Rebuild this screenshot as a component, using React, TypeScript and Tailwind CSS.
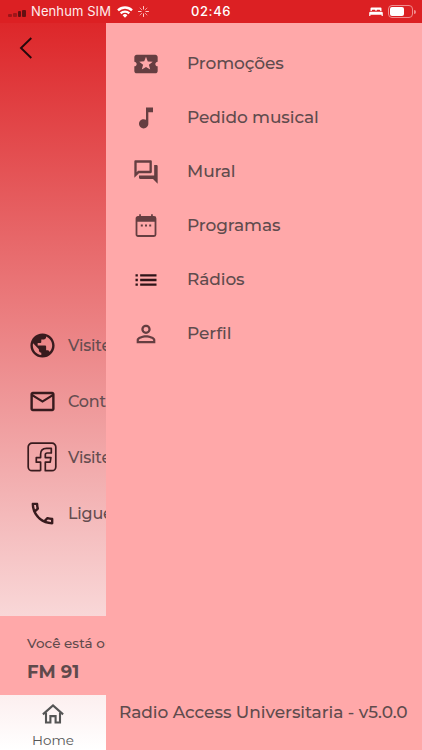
import type { ReactNode } from 'react';
import {
  MdList,
  MdLocalActivity,
  MdMailOutline,
  MdMusicNote,
  MdOutlineLocalPhone,
  MdOutlineQuestionAnswer,
  MdPersonOutline,
  MdPublic,
} from 'react-icons/md';

interface MenuItem {
  label: string;
  icon: ReactNode;
}

function CalendarIcon() {
  return (
    <svg width="28" height="28" viewBox="0 0 28 28" fill="none">
      <rect x="4.5" y="5" width="19" height="19" rx="1.5" stroke="currentColor" strokeWidth="1.8" />
      <path d="M4.5 5h19v4.8h-19zM7.2 2.2h1.7V5H7.2zM19.1 2.2h1.7V5h-1.7z" fill="currentColor" />
      <path d="M8.8 12.6h2v2h-2zM13 12.6h2v2h-2zM17.2 12.6h2v2h-2z" fill="currentColor" />
    </svg>
  );
}

function HomeIcon() {
  return (
    <svg width="22" height="20" viewBox="0 0 22 20" fill="none" stroke="currentColor" strokeWidth="2.1">
      <path d="M.9 10.4 11 1.5l10.1 8.9" />
      <path d="M4 8.5V18.5h4.4v-6.4h5.2v6.4H18V8.5" />
    </svg>
  );
}

function FacebookIcon() {
  return (
    <svg width="30" height="30" viewBox="0 0 30 30" fill="none" stroke="currentColor" strokeWidth="1.7" strokeLinejoin="round">
      <path d="M13.6 28.7H5A3.8 3.8 0 0 1 1.2 25V5A3.8 3.8 0 0 1 5 1.2H25A3.8 3.8 0 0 1 28.8 5V25A3.8 3.8 0 0 1 25 28.7H18.3V20.2H23.2L23.9 15.6H18.3V12.8Q18.3 11 20.2 11H24.3V6.4H19.5Q13.6 6.4 13.6 12.3V15.6H9.3V20.2H13.6V28.7" />
    </svg>
  );
}

const menuItems: MenuItem[] = [
  { label: 'Promoções', icon: <MdLocalActivity size={28} /> },
  { label: 'Pedido musical', icon: <MdMusicNote size={28} /> },
  { label: 'Mural', icon: <MdOutlineQuestionAnswer size={28} /> },
  { label: 'Programas', icon: <CalendarIcon /> },
  { label: 'Rádios', icon: <MdList size={28} className="text-[#2e1418]" /> },
  { label: 'Perfil', icon: <MdPersonOutline size={28} /> },
];

const links: MenuItem[] = [
  { label: 'Visite nosso site', icon: <MdPublic size={29} /> },
  { label: 'Contato', icon: <MdMailOutline size={29} /> },
  { label: 'Visite nossa página', icon: <FacebookIcon /> },
  { label: 'Ligue para nós', icon: <MdOutlineLocalPhone size={29} /> },
];

function StatusBar() {
  return (
    <header className="flex h-[23px] shrink-0 items-center bg-[#dc2023] pl-2 font-[Inter,sans-serif] text-white">
      {/* Signal */}
      <div className="flex w-[18px] shrink-0 items-end gap-[1px] pt-[3px]">
        <span className="h-[3px] w-[4px] rounded-[1px] bg-[#9f1519]" />
        <span className="h-[4px] w-[4px] rounded-[1px] bg-[#9f1519]" />
        <span className="h-[6px] w-[4px] rounded-[1px] bg-[#641012]" />
        <span className="h-[7px] w-[4px] rounded-[1px] bg-[#641012]" />
      </div>
      <span className="ml-[5px] w-[81px] text-[13px] tracking-[0.1px] whitespace-nowrap text-[#ffecec]">Nenhum SIM</span>
      {/* Wifi */}
      <svg className="ml-[5px]" width="16" height="12" viewBox="0 0 16 12" fill="none" stroke="white" strokeWidth="2.4">
        <path d="M1 4.4a10 10 0 0 1 14 0" />
        <path d="M3.7 7.4a6.2 6.2 0 0 1 8.6 0" />
        <path d="M8 11.8 5.6 9.3a3.3 3.3 0 0 1 4.8 0z" fill="white" stroke="none" />
      </svg>
      {/* Activity spinner */}
      <svg className="ml-[5px]" width="11" height="11" viewBox="0 0 11 11" stroke="#ffc9c9" strokeWidth="1" strokeLinecap="round">
        <path d="M5.5.5v2.6M5.5 7.9v2.6M.5 5.5h2.6M7.9 5.5h2.6" />
        <path d="m2 2 1.8 1.8M7.2 7.2 9 9M9 2 7.2 3.8M3.8 7.2 2 9" opacity=".7" />
      </svg>
      <span className="ml-[42px] text-[13px] font-medium tracking-[0.6px]">02:46</span>
      <svg className="mt-px mr-[5px] ml-auto" width="14" height="10" viewBox="0 0 14 10" fill="white">
        <path d="M1.5 4V1.4Q1.5.4 2.5.4h9q1 0 1 1V4h-1.3V3.4q0-.7-.7-.7H8.2q-.7 0-.7.7V4h-1v-.6q0-.7-.7-.7H3.5q-.7 0-.7.7V4z" />
        <path d="M.2 8.9V6q0-1.3 1.3-1.3h11q1.3 0 1.3 1.3v2.9h-1.2V7.8H1.4v1.1z" />
      </svg>
      <div className="flex h-[13px] w-[25px] items-center rounded-[4px] border border-[#f08d8f] px-px">
        <span className="h-[9px] w-[14px] rounded-[2px] bg-white" />
      </div>
      <span className="mr-[6px] ml-px h-[4px] w-[2px] rounded-r bg-[#f08d8f]" />
    </header>
  );
}

function HomePage() {
  return (
    <main className="flex w-[106px] shrink-0 flex-col overflow-hidden whitespace-nowrap">
      <button className="mt-[13px] ml-[19px] flex h-[23px] w-4 items-center">
        <svg width="14" height="22" viewBox="0 0 14 22" fill="none" stroke="#24090b" strokeWidth="1.9">
          <path d="M12.3 1 2 11l10.3 10" />
        </svg>
      </button>

      <nav className="mt-[258px] flex flex-col">
        {links.map((item) => (
          <a key={item.label} className="flex h-14 items-center pl-[27px] text-[#654d50]">
            <span className="flex w-[30px] shrink-0 justify-center text-[#381b1e]">{item.icon}</span>
            <span className="mt-0.5 ml-[11px] text-[16px] font-medium tracking-[-0.2px]">{item.label}</span>
          </a>
        ))}
      </nav>

      {/* Now playing */}
      <section className="mt-auto flex h-[79px] shrink-0 flex-col bg-[#ffa8a9] pl-[27px] text-[#5f4a4c]">
        <span className="mt-[17px] text-[13.5px] leading-5 font-medium tracking-[0.03px]">Você está ouvindo</span>
        <strong className="mt-[7px] text-[18px] leading-6 font-bold">FM 91</strong>
      </section>

      <footer className="flex h-[55px] shrink-0 flex-col items-center text-[#555]">
        <span className="mt-[9px]">
          <HomeIcon />
        </span>
        <span className="mt-[6px] text-[13.5px] leading-5">Home</span>
      </footer>
    </main>
  );
}

function Drawer() {
  return (
    <aside className="flex grow flex-col bg-[#ffa8a9] pt-[14px] text-[#604b4d]">
      {menuItems.map((item) => (
        <a key={item.label} className="flex h-[54px] items-center pl-[26px]">
          <span className="text-[#653e41]">{item.icon}</span>
          <span className="ml-[27px] text-[17px] font-medium tracking-[-0.1px]">{item.label}</span>
        </a>
      ))}
      <p className="mt-auto mb-[26px] pl-[13px] text-[17px] leading-6 font-medium tracking-[-0.06px] whitespace-nowrap">
        Radio Access Universitaria - v5.0.0
      </p>
    </aside>
  );
}

export default function App() {
  return (
    <div className="flex h-[750px] w-[422px] flex-col overflow-hidden bg-linear-to-b/srgb from-[#dc2023] to-white font-[Montserrat,Inter,sans-serif]">
      <StatusBar />
      <div className="flex min-h-0 grow">
        <HomePage />
        <Drawer />
      </div>
    </div>
  );
}
